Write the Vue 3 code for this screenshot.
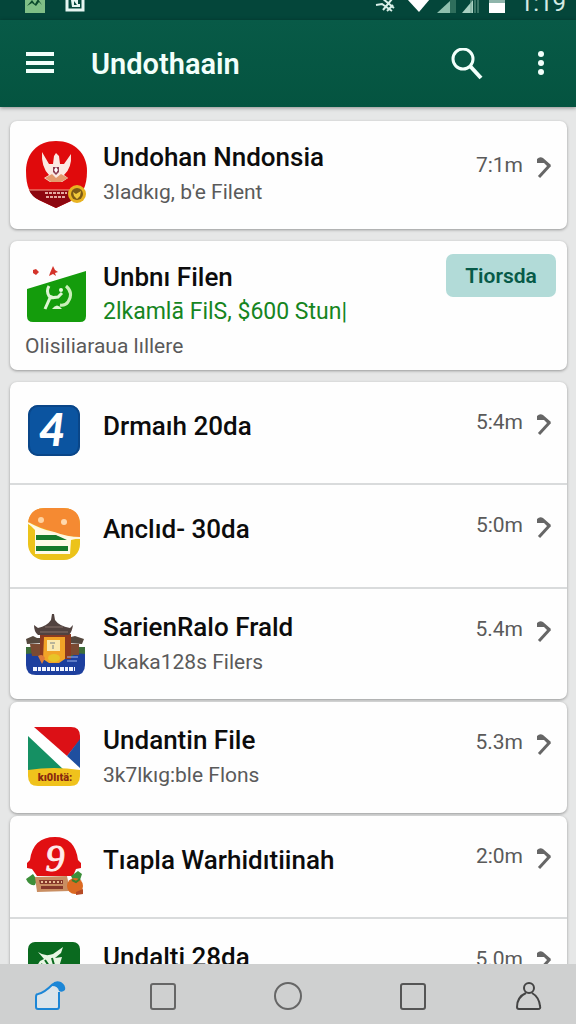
<template>
  <div class="screen">
    <div class="status-bar">
      <svg class="status-icons" width="60" height="20" viewBox="0 0 60 20" aria-hidden="true">
        <rect x="0" y="0" width="20" height="20" fill="#7fbf86" />
        <path d="M2 13 L7 7 L10 11 L13 6 L17 12 L14 9 L11 13 L7 10 Z" fill="#0a4a2c" />
        <path d="M42 0 V17 H58 V0" fill="none" stroke="#e6f5f1" stroke-width="3" />
        <path d="M46 7 L53 5 V11 H55 V14 H47 Z" fill="#e6f5f1" />
        <path d="M49 8 L52 12 H49 Z" fill="#04463a" />
      </svg>
      <div class="status-right">
        <svg class="status-icons" width="142" height="20" viewBox="0 0 142 20" aria-hidden="true">
          <path d="M2 12 L8 11 L18 18 M8 5 L20 15 M9 17 L18 6 M13 18 L19 12" fill="none" stroke="#d9efe8" stroke-width="2" />
          <path d="M33 6 H56 L45 19 Z" fill="#fff" />
          <path d="M63 20 L76 8 V20 Z" fill="#8fbfae" />
          <path d="M76 5 H82 V20 H76 Z" fill="#2f6e5c" />
          <path d="M88 20 L99 7 V20 Z" fill="#a9d0c2" />
          <path d="M97 5 V20 M101 4 V20 M104 3 V20" stroke="#6fa391" stroke-width="1" />
          <rect x="115" y="4" width="16" height="6" fill="#8fb5ab" />
          <rect x="115" y="10" width="16" height="10" fill="#fff" />
        </svg>
        <span class="clock">1:19</span>
      </div>
    </div>

    <header class="app-bar">
      <button class="icon-btn" type="button" aria-label="Menu">
        <svg width="30" height="32" viewBox="0 0 30 32">
          <path d="M1 6 H29 M1 15 H29 M1 23 H29" stroke="#f2fffb" stroke-width="4" />
        </svg>
      </button>
      <h1 class="app-title">Undothaain</h1>
      <button class="icon-btn" type="button" aria-label="Search">
        <svg width="32" height="32" viewBox="0 0 32 32" fill="none" stroke="#f2fffb">
          <circle cx="12" cy="11" r="10" stroke-width="3" />
          <path d="M19 18 L30 30" stroke-width="4" />
        </svg>
      </button>
      <button class="icon-btn more" type="button" aria-label="More options">
        <svg width="12" height="32" viewBox="0 0 12 32" fill="#f2fffb">
          <circle cx="6" cy="6" r="3" />
          <circle cx="6" cy="15" r="3" />
          <circle cx="6" cy="24" r="3" />
        </svg>
      </button>
    </header>

    <main class="list">
      <section v-for="(card, c) in cards" :key="c" class="card" :class="{ spaced: card.spaced }">
        <article v-for="item in card.items" :key="item.icon" class="row" :class="item.kind">
          <svg class="logo" width="62" height="70" viewBox="0 0 62 70" aria-hidden="true">
            <g v-if="item.icon === 'garuda'">
              <path d="M31 2 C50 2 62 15 62 32 C62 48 57 56 48 61 L31 69 L14 61 C5 56 1 48 1 32 C1 15 12 2 31 2 Z" fill="#e00a0c" />
              <path d="M4 51 H58 Q54 58 48 61 L31 69 L14 61 Q7 58 4 51 Z" fill="#8d0710" />
              <path d="M4 51 H46" stroke="#f3a28f" stroke-width="1" />
              <path d="M17 13 L24 25 L28 25 L29 17 L31 14 L34 17 L35 25 L39 25 L46 15 Q47 29 39 36 L43 39 L37 43 H25 L19 39 L24 36 Q16 28 17 13 Z" fill="#fbe9e2" />
              <path d="M20 39 L27 35 L31 39 L36 35 L43 39 L36 43 H26 Z" fill="#e49a6d" />
              <path d="M28 28 H34 V33 L31 36 L28 33 Z" fill="#8a3b50" />
              <path d="M31 28 L33 31 L31 34 L29 31 Z" fill="#fff" />
              <path d="M20 54 H42 M21 58 H41" stroke="#e5a9a0" stroke-width="2" stroke-dasharray="3 1" />
              <circle cx="52" cy="55" r="9" fill="#e8b322" />
              <circle cx="52" cy="55" r="6" fill="#7c5a16" />
              <path d="M48 53 L51 55 L56 52 L55 57 L52 60 L49 57 Z" fill="#f0c93c" />
            </g>
            <g v-else-if="item.icon === 'slope'">
              <path d="M2 30 L61 12 V57 Q61 63 55 63 H8 Q2 63 2 57 Z" fill="#149c0c" />
              <path d="M8 11 L11 10 L14 13 L11 16 L8 14 Z M25 14 L28 7 L30 11 L33 13 L30 14 L31 17 L28 15 L24 17 Z" fill="#d4342b" />
              <path d="M24 27 Q21 32 24 37 L29 39 M20 50 L25 39 L33 38 L37 34" fill="none" stroke="#dff5d4" stroke-width="3" />
              <path d="M41 27 Q49 34 43 43 Q40 47 35 46" fill="none" stroke="#c9efba" stroke-width="3" />
              <path d="M27 50 Q32 43 37 50 Z" fill="#dff5d4" />
              <circle cx="36" cy="31" r="2" fill="#eafbe0" />
            </g>
            <g v-else-if="item.icon === 'four'">
              <rect x="3" y="5" width="52" height="51" rx="10" fill="#0b54a0" />
              <rect x="4" y="6" width="50" height="49" rx="9" fill="none" stroke="#0a4688" stroke-width="2" />
              <text x="27" y="46" class="numeral">4</text>
            </g>
            <g v-else-if="item.icon === 'burger'">
              <rect x="3" y="5" width="52" height="52" rx="16" fill="#ecc31a" />
              <path d="M3 21 Q4 5 20 5 H38 Q55 5 55 22 V34 Q42 34 29 29 Q15 25 3 19 Z" fill="#f58a32" />
              <path d="M3 20 Q15 27 29 30 Q42 35 55 35 L46 37 L45 51 H10 V27 Z" fill="#fffbe8" />
              <path d="M11 32 H31 L42 37 H11 Z M11 43 H43 V48 H11 Z" fill="#167a2b" />
              <path d="M3 20 Q15 27 29 30 Q42 35 55 35" fill="none" stroke="#fff6e2" stroke-width="2" />
              <circle cx="16" cy="17" r="3" fill="#ffd2a0" />
              <circle cx="39" cy="19" r="3" fill="#ffd9ae" />
            </g>
            <g v-else-if="item.icon === 'temple'">
              <path d="M1 40 H60 V58 Q60 68 50 68 H11 Q1 68 1 58 Z" fill="#1d3f9e" />
              <path d="M1 40 H60 V47 Q50 45 45 51 L16 52 Q12 45 1 47 Z" fill="#3d6d3a" />
              <path d="M1 32 L8 29 L12 31 L18 31 V36 L2 37 Z M42 31 L50 29 L59 32 L57 37 L42 36 Z" fill="#55483e" />
              <path d="M5 37 H17 V49 H7 Z M43 37 H54 V48 H43 Z" fill="#7a4a32" />
              <path d="M15 27 H46 V52 H15 Z" fill="#8c3a20" />
              <path d="M27 7 L29 7 L30 13 Q34 19 45 21 L48 18 Q47 25 44 28 H13 Q9 25 9 18 L13 21 Q22 19 26 13 Z" fill="#51423f" />
              <path d="M20 20 H38 M15 25 H43" stroke="#86706a" stroke-width="1" />
              <path d="M19 30 H40 V52 L34 56 H24 L18 52 Z" fill="#f2a327" />
              <rect x="22" y="33" width="13" height="11" fill="#fbe9ae" />
              <path d="M25 36 H30 M28 38 V42" stroke="#b9b59a" stroke-width="2" />
              <path d="M13 49 Q18 46 20 51 L17 57 Z" fill="#e07b3a" />
              <ellipse cx="29" cy="51" rx="6" ry="4" fill="#e8c428" />
              <path d="M42 50 H53 M42 54 H52" stroke="#9db5ea" stroke-width="1" />
              <path d="M8 62 H50" stroke="#f2f5ff" stroke-width="4" stroke-dasharray="4 1 3 1" />
            </g>
            <g v-else-if="item.icon === 'stripes'">
              <path d="M12 7 H46 Q55 7 55 16 V50 H3 V16 Q3 7 12 7 Z" fill="#fff" />
              <path d="M9 7 H46 Q55 7 55 16 V20 L42 36 Z" fill="#dc1016" />
              <path d="M55 19 V48 L42 36 Z" fill="#1f4f9f" />
              <path d="M3 16 L39 50 H3 Z" fill="#159063" />
              <path d="M3 50 Q29 46 55 50 V56 Q55 66 45 66 H13 Q3 66 3 56 Z" fill="#f0c21c" />
              <text x="30" y="61" class="ribbon">kı0lıtä:</text>
            </g>
            <g v-else-if="item.icon === 'nine'">
              <path d="M2 29 L5 26 Q8 3 30 3 Q50 3 53 26 L56 29 V34 L51 35 L48 42 H12 L7 35 L2 34 Z" fill="#e10f12" />
              <text x="30" y="37" class="nine">9</text>
              <path d="M1 45 L8 40 L12 46 L10 51 Q4 52 1 45 Z M46 42 L53 37 L57 40 L55 46 L49 48 Z" fill="#3d8f3a" />
              <path d="M10 43 L42 42 L45 57 L12 58 Z" fill="#c98e62" />
              <path d="M14 46 H38 V50 H15 Z M16 52 H38 V55 H16 Z" fill="#86382a" />
              <path d="M16 48 H37" stroke="#e9bd95" stroke-width="2" stroke-dasharray="2 2" />
              <circle cx="50" cy="52" r="8" fill="#dc6a22" />
              <path d="M51 58 L58 55 V60 L51 61 Z" fill="#b64a25" />
              <path d="M47 46 L51 48 L55 45" fill="none" stroke="#3d7f2c" stroke-width="2" />
            </g>
            <g v-else>
              <rect x="3" y="5" width="52" height="52" rx="7" fill="#0a6a1f" />
              <path d="M13 15 Q20 20 28 17 L38 10 L36 16 L30 21 L37 20 L34 30 L10 32 L15 24 L19 22 Z" fill="#e9f6e4" />
              <path d="M20 23 L24 29 M27 21 L29 28 M16 27 L20 30" stroke="#0a6a1f" stroke-width="2" />
            </g>
          </svg>
          <div class="body">
            <h2 class="title">{{ item.title }}</h2>
            <p v-if="item.sub" class="sub">{{ item.sub }}</p>
          </div>
          <button v-if="item.tag" class="tag" type="button">{{ item.tag }}</button>
          <div v-else class="meta">
            <span class="time">{{ item.time }}</span>
            <button class="go" type="button" :aria-label="'Open ' + item.title">
              <svg width="16" height="24" viewBox="0 0 16 24">
                <path d="M1 8 V4 Q4 1 7 3 L15 10 L12 12 L8 8 Z" fill="#666" />
                <path d="M14 10 L3 22" fill="none" stroke="#666" stroke-width="3" />
              </svg>
            </button>
          </div>
          <p v-if="item.note" class="note">{{ item.note }}</p>
        </article>
      </section>
    </main>

    <nav class="nav-bar">
      <button v-for="tab in tabs" :key="tab.label" class="nav-btn" type="button" :aria-label="tab.label">
        <svg width="32" height="32" viewBox="0 0 32 32" fill="none" :stroke="tab.color" stroke-width="2">
          <g v-if="tab.shape === 'home'">
            <path d="M3 13 L8 12 L20 3 L26 12 V29 H3 Z" fill="#dbe4ea" stroke="none" />
            <path d="M19 4 Q10 13 4 14 Q2 14 2 17 V27 Q2 29 4 29 H23 Q25 29 25 27 V12" />
            <path d="M18 4 Q21 0 27 2 Q32 5 31 10 Q28 13 25 11 Q24 6 18 6 Z" fill="#1c86d6" stroke="none" />
          </g>
          <rect v-else-if="tab.shape === 'square'" x="4" y="4" width="24" height="25" rx="2" />
          <circle v-else-if="tab.shape === 'circle'" cx="16" cy="16" r="13" />
          <g v-else>
            <circle cx="19" cy="8" r="5" />
            <path d="M16 13 Q7 17 7 27 Q7 29 9 29 H28 Q31 29 30 26 Q29 17 22 13" />
          </g>
        </svg>
      </button>
    </nav>
  </div>
</template>

<script setup>
const cards = [
  {
    spaced: true,
    items: [{ icon: 'garuda', title: 'Undohan Nndonsia', sub: "3ladkıg, b'e Filent", time: '7:1m', kind: 'top' }],
  },
  {
    spaced: true,
    items: [
      {
        icon: 'slope',
        title: 'Unbnı Filen',
        sub: '2lkamlā FilS, $600 Stun|',
        note: 'Olisiliaraua lıllere',
        tag: 'Tiorsda',
        kind: 'featured',
      },
    ],
  },
  {
    items: [
      { icon: 'four', title: 'Drmaıh 20da', time: '5:4m', kind: 'single' },
      { icon: 'burger', title: 'Anclıd- 30da', time: '5:0m', kind: 'single' },
      { icon: 'temple', title: 'SarienRalo Frald', sub: 'Ukaka128s Filers', time: '5.4m' },
    ],
  },
  {
    items: [{ icon: 'stripes', title: 'Undantin File', sub: '3k7lkıg:ble Flons', time: '5.3m' }],
  },
  {
    items: [
      { icon: 'nine', title: 'Tıapla Warhidıtiinah', time: '2:0m', kind: 'single' },
      { icon: 'deer', title: 'Undalti 28da', time: '5.0m' },
    ],
  },
];

const tabs = [
  { label: 'Home', shape: 'home', color: '#1c86d6' },
  { label: 'Files', shape: 'square', color: '#666' },
  { label: 'Center', shape: 'circle', color: '#666' },
  { label: 'Recent', shape: 'square', color: '#555' },
  { label: 'Profile', shape: 'person', color: '#444' },
];
</script>

<style>
body {
  margin: 0;
  background: #e6e7e7;
}
</style>

<style scoped>
.screen {
  display: flex;
  flex-direction: column;
  height: 100vh;
  font-family: Roboto, "Liberation Sans", sans-serif;
  background: #e6e7e7;
  overflow: hidden;
}

button {
  padding: 0;
  border: 0;
  background: none;
  font-family: inherit;
  cursor: pointer;
}

svg {
  display: block;
}

h1,
h2,
p {
  margin: 0;
}

.status-bar {
  flex: none;
  display: flex;
  align-items: flex-end;
  justify-content: space-between;
  box-sizing: border-box;
  height: 20px;
  padding: 0 10px 7px 25px;
  background: #04463a;
  overflow: hidden;
}

.status-right {
  display: flex;
  gap: 4px;
}

.clock {
  font-size: 24px;
  line-height: 20px;
  color: #d4ebe4;
}

.app-bar {
  flex: none;
  display: flex;
  align-items: center;
  height: 87px;
  padding: 0 29px 0 25px;
  background: linear-gradient(#085a47, #045440);
  box-shadow: 0 1px 4px rgba(0, 0, 0, 0.4);
}

.app-title {
  flex: 1;
  margin-left: 36px;
  font-size: 29px;
  line-height: 36px;
  font-weight: 600;
  color: #f2fffb;
}

.more {
  margin-left: 52px;
}

.list {
  flex: 1;
  min-height: 0;
  padding: 14px 9px 0 10px;
  overflow: hidden;
}

.card {
  margin-bottom: 3px;
  border-radius: 7px;
  background: #fefefe;
  box-shadow: 0 1px 3px rgba(0, 0, 0, 0.35);
}

.card.spaced {
  margin-bottom: 12px;
}

.row {
  display: grid;
  grid-template-columns: 62px 1fr auto;
  column-gap: 16px;
  align-items: start;
  align-content: start;
  box-sizing: border-box;
  min-height: 111px;
  padding: 18px 11px 0 15px;
}

.row + .row {
  min-height: 112px;
  border-top: 2px solid #d9dbdc;
}

.row.top {
  min-height: 108px;
}

.row.featured {
  height: 129px;
}

.row.single {
  min-height: 101px;
}

.row + .row.single {
  min-height: 104px;
}

.body {
  padding-top: 2px;
  min-width: 0;
}

.top .body,
.featured .body {
  padding-top: 0;
}

.single .body {
  padding-top: 8px;
}

.title {
  font-size: 26px;
  line-height: 36px;
  font-weight: 500;
  color: #0c0c0c;
  white-space: nowrap;
}

.sub {
  font-size: 21px;
  line-height: 34px;
  color: #5a5a5a;
  white-space: nowrap;
}

.featured .sub {
  font-size: 23px;
  color: #16851f;
}

.note {
  grid-column: 1 / -1;
  font-size: 21px;
  line-height: 34px;
  color: #5a5a5a;
}

.meta {
  display: flex;
  align-items: center;
  gap: 13px;
  padding: 8px 4px 0 0;
}

.top .meta {
  padding-top: 12px;
}

.time {
  font-size: 21px;
  line-height: 28px;
  color: #5a5a5a;
}

.go {
  padding-top: 4px;
}

.tag {
  width: 110px;
  height: 43px;
  margin-top: -5px;
  border-radius: 7px;
  background: #b2dbd8;
  font-size: 21px;
  line-height: 28px;
  font-weight: 600;
  color: #075a48;
}

.numeral {
  font-family: Lato, sans-serif;
  font-size: 46px;
  font-weight: 900;
  font-style: italic;
  text-anchor: middle;
  fill: #fff;
}

.ribbon {
  font-size: 11px;
  font-weight: 900;
  text-anchor: middle;
  fill: #8a2a10;
}

.nine {
  font-family: "Liberation Serif", serif;
  font-size: 38px;
  font-style: italic;
  text-anchor: middle;
  stroke: #ffeceb;
  fill: #ffeceb;
}

.nav-bar {
  flex: none;
  display: grid;
  grid-template-columns: 4fr 5fr 5fr 5fr 4fr;
  height: 60px;
  background: #cfd0d0;
}

.nav-btn {
  display: flex;
  align-items: center;
  justify-content: center;
  padding-top: 4px;
}
</style>
